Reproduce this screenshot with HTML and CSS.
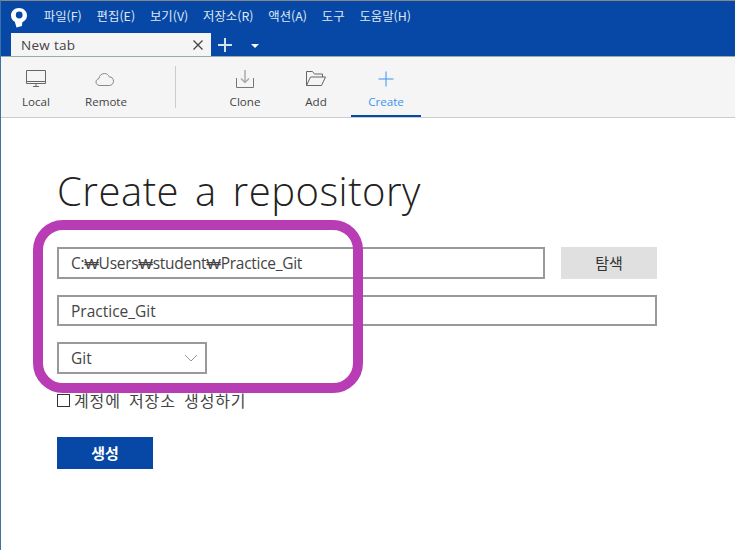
FILE: index.html
```html
<!DOCTYPE html>
<html lang="ko">
<head>
    <meta charset="UTF-8">
    <title>Sourcetree</title>
    <link rel="stylesheet" href="styles.css">
</head>
<body>
    <div class="app">
        <div class="menubar">
            <svg class="logo" width="16" height="20" viewBox="0 0 16 20">
                <path d="M8 0C3.400 0 0 3.200 0 7.500c0 2.900 1.500 5 3.800 6.200L5.500 19.500 11 18 11.300 14.300C14.200 13 16 10.600 16 7.500 16 3.200 12.600 0 8 0Z" fill="#fff"/>
                <circle cx="8.200" cy="7" r="3.400" fill="#0747a6"/>
            </svg>
            <span>파일(F)</span>
            <span>편집(E)</span>
            <span>보기(V)</span>
            <span>저장소(R)</span>
            <span>액션(A)</span>
            <span>도구</span>
            <span>도움말(H)</span>
        </div>
        <div class="tabbar">
            <div class="tab">
                <span class="tab-title">New tab</span>
                <svg width="10" height="10" viewBox="0 0 10 10"><path d="M0.500 0.500l9 9M9.500 0.500l-9 9" stroke="#444" stroke-width="1.300"/></svg>
            </div>
            <svg class="tab-add" width="16" height="16" viewBox="0 0 16 16"><path d="M8 1v14M1 8h14" stroke="#d5e0f0" stroke-width="2"/></svg>
            <div class="tab-more"></div>
        </div>
        <div class="toolbar">
            <div class="tool tool-local">
                <svg width="22" height="20" viewBox="0 0 22 20" fill="none" stroke="#666"><path d="M1.500 1.500h19v13h-19zM1.500 12.500h19M8 17.500h6M11 15v2"/></svg>
                <span>Local</span>
            </div>
            <div class="tool tool-remote">
                <svg width="22" height="20" viewBox="0 0 22 20" fill="none" stroke="#888"><path d="M5 16.500C2.500 16.500 1 15 1 13c0-1.800 1.200-3 2.800-3.200C4.300 6.500 6.500 4.500 9.500 4.500c2.300 0 4 1.300 4.700 3.300 2.700 0 4.300 2 4.300 4.300 0 2.500-1.800 4.400-4.200 4.400z"/></svg>
                <span>Remote</span>
            </div>
            <div class="divider"></div>
            <div class="tool tool-clone">
                <svg width="18" height="20" viewBox="0 0 18 20" fill="none"><path d="M9 1v12M5 9.500l4 4 4-4" stroke="#aaa" stroke-width="1.500"/><path d="M0.500 9v9.500h17V9" stroke="#777"/></svg>
                <span>Clone</span>
            </div>
            <div class="tool tool-add">
                <svg width="22" height="20" viewBox="0 0 22 20" fill="none" stroke="#666"><path d="M1.500 16.500v-14h6l2 2.500h8v3M1.500 16.500l4-8.500h15l-4 8.500z"/></svg>
                <span>Add</span>
            </div>
            <div class="tool tool-create active">
                <svg width="20" height="20" viewBox="0 0 20 20"><path d="M10 2.500v15M2.500 10h15" stroke="#3b93f0"/></svg>
                <span>Create</span>
            </div>
        </div>
        <div class="content">
            <h1>Create a repository</h1>
            <div class="row-path">
                <div class="field field-path">C:₩Users₩student₩Practice_Git</div>
                <div class="btn-browse">탐색</div>
            </div>
            <div class="field field-name">Practice_Git</div>
            <div class="field field-type">
                <span>Git</span>
                <svg width="14" height="8" viewBox="0 0 14 8"><path d="M1 1l6 6 6-6" fill="none" stroke="#999"/></svg>
            </div>
            <label class="check"><span class="box"></span>계정에 저장소 생성하기</label>
            <div class="btn-create">생성</div>
            <div class="highlight"></div>
        </div>
    </div>
</body>
</html>
```

FILE: styles.css
```css
* {
    box-sizing: border-box;
}
html, body {
    margin: 0;
    height: 100%;
}
body {
    font-family: "Noto Sans CJK KR", "Noto Sans", sans-serif;
    background: white;
    color: #333;
    overflow: hidden;
}
.app {
    height: 550px;
    border-left: 1px solid #3b73a6;
    border-top: 1px solid #888;
}
.menubar {
    height: 32px;
    background: #0747a6;
    color: #dfe7f3;
    font-size: 12.400px;
    display: flex;
    align-items: center;
    padding: 0 0 2px 10px;
    gap: 14.800px;
}
.logo {
    margin: 3px 2px 0 0;
}
.tabbar {
    height: 23px;
    background: #0747a6;
    padding-left: 10px;
    display: flex;
    align-items: center;
}
.tab {
    width: 200px;
    height: 23px;
    background: #f5f5f5;
    padding: 0 8px 0 10px;
    display: flex;
    align-items: center;
    justify-content: space-between;
}
.tab-title {
    font-family: "Open Sans", sans-serif;
    font-size: 13.500px;
    color: #444;
    letter-spacing: 0.300px;
}
.tab-add {
    margin-left: 6px;
}
.tab-more {
    margin-left: 18px;
    margin-top: 2px;
    border-left: 4px solid transparent;
    border-right: 4px solid transparent;
    border-top: 4px solid white;
}
.toolbar {
    height: 62px;
    background: #f5f5f5;
    border-top: 1px solid #9aa;
    border-bottom: 1px solid #ccc;
    display: flex;
    font-family: "Open Sans", sans-serif;
    font-size: 11.600px;
    color: #444;
}
.tool {
    display: flex;
    flex-direction: column;
    align-items: center;
    padding-top: 12px;
    gap: 5px;
}
.tool-local { width: 70px; }
.tool-remote { width: 70px; }
.divider {
    width: 1px;
    height: 42px;
    margin: 9px 0 0 34px;
    background: #ccc;
}
.tool-clone { width: 70px; margin-left: 34px; }
.tool-add { width: 70px; margin-left: 1px; }
.tool-create { width: 70px; }
.active {
    color: #3b93f0;
    border-bottom: 2px solid #0747a6;
}
.content {
    position: relative;
    padding: 46px 0 0 56px;
}
h1 {
    margin: 0;
    height: 58px;
    font-family: "Open Sans", sans-serif;
    font-weight: 300;
    font-size: 40px;
    line-height: 54px;
    word-spacing: 5px;
    letter-spacing: 0.520px;
    color: #222;
}
.row-path {
    display: flex;
    gap: 16px;
    margin-top: 25px;
}
.field {
    border: 2px solid #999;
    background: white;
    height: 32px;
    padding: 0 12px;
    font-family: "Open Sans", sans-serif;
    font-size: 15.500px;
    line-height: 28px;
    color: #444;
}
.field-path {
    width: 488px;
    letter-spacing: -0.280px;
}
.btn-browse {
    width: 96px;
    height: 32px;
    background: #e0e0e0;
    text-align: center;
    font-size: 15px;
    line-height: 32px;
}
.field-name {
    width: 600px;
    height: 31px;
    margin-top: 16px;
}
.field-type {
    width: 150px;
    margin-top: 16px;
    display: flex;
    align-items: center;
    justify-content: space-between;
    padding-right: 7px;
}
.check {
    display: flex;
    align-items: center;
    gap: 4px;
    height: 20px;
    margin-top: 16px;
    font-size: 16px;
    letter-spacing: 0.850px;
    word-spacing: 3px;
    color: #444;
}
.box {
    width: 13px;
    height: 13px;
    border: 1px solid #333;
}
.btn-create {
    width: 96px;
    height: 32px;
    margin-top: 27px;
    background: #0747a6;
    color: white;
    font-size: 15px;
    font-weight: 700;
    text-align: center;
    line-height: 32px;
}
.highlight {
    position: absolute;
    left: 32px;
    top: 102px;
    width: 330px;
    height: 173px;
    border: 10px solid #b83db5;
    border-radius: 30px;
}
```
